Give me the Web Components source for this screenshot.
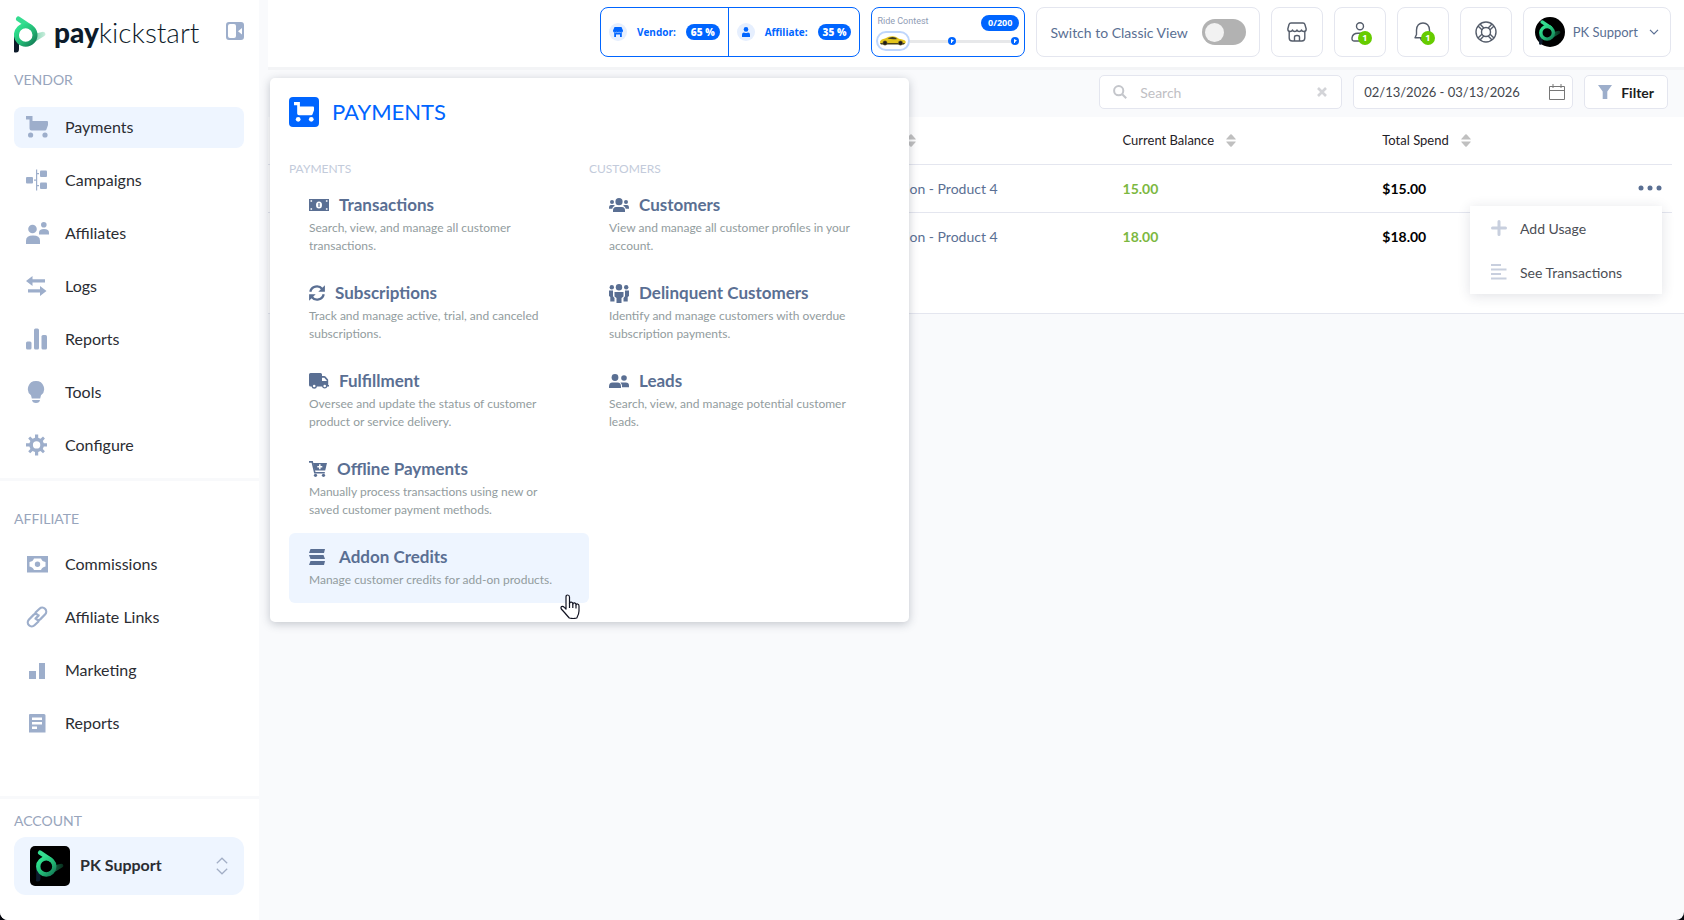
<!DOCTYPE html>
<html lang="en">
<head>
<meta charset="utf-8">
<meta name="viewport" content="width=device-width, initial-scale=1">
<title>PayKickstart - Addon Credits</title>
<style>
    :root {
        --blue: #0065ff;
        --slate: #5a6f93;
        --icon: #9daecb;
        --label: #98a5bc;
        --tint: #eef5ff;
        --line: #e4e6ef;
        --page: #f9fafc;
        --font: Lato, "Open Sans", "Liberation Sans", sans-serif;
    }
    html { background: #05060d; }
    body { margin: 0; font-family: var(--font); color: #2b2d33; }
</style>
</head>
<body>

<pk-app>
    <pk-sidebar slot="sidebar">
        <pk-nav-group label="Vendor">
            <pk-nav-item icon="cart" active>Payments</pk-nav-item>
            <pk-nav-item icon="campaigns">Campaigns</pk-nav-item>
            <pk-nav-item icon="affiliates">Affiliates</pk-nav-item>
            <pk-nav-item icon="logs">Logs</pk-nav-item>
            <pk-nav-item icon="bars">Reports</pk-nav-item>
            <pk-nav-item icon="bulb">Tools</pk-nav-item>
            <pk-nav-item icon="gear">Configure</pk-nav-item>
        </pk-nav-group>
        <pk-nav-group label="Affiliate">
            <pk-nav-item icon="cash">Commissions</pk-nav-item>
            <pk-nav-item icon="link">Affiliate Links</pk-nav-item>
            <pk-nav-item icon="steps">Marketing</pk-nav-item>
            <pk-nav-item icon="sheet">Reports</pk-nav-item>
        </pk-nav-group>
        <pk-account slot="account" name="PK Support"></pk-account>
    </pk-sidebar>

    <pk-topbar slot="topbar">
        <pk-split>
            <pk-stat icon="shopSolid" value="65 %">Vendor:</pk-stat>
            <pk-stat icon="userSolid" value="35 %">Affiliate:</pk-stat>
        </pk-split>
        <pk-contest score="0/200">Ride Contest</pk-contest>
        <pk-switch>Switch to Classic View</pk-switch>
        <pk-icon-button icon="shop" label="Marketplace"></pk-icon-button>
        <pk-icon-button icon="user" label="Affiliates" count="1"></pk-icon-button>
        <pk-icon-button icon="bell" label="Notifications" count="1"></pk-icon-button>
        <pk-icon-button icon="ring" label="Help"></pk-icon-button>
        <pk-profile>PK Support</pk-profile>
    </pk-topbar>

    <pk-toolbar range="02/13/2026 - 03/13/2026"></pk-toolbar>
    <pk-credits-table></pk-credits-table>

    <pk-mega-menu slot="menu" heading="Payments">
        <pk-menu-column label="Payments">
            <pk-menu-card icon="money" heading="Transactions">Search, view, and manage all customer transactions.</pk-menu-card>
            <pk-menu-card icon="sync" heading="Subscriptions">Track and manage active, trial, and canceled subscriptions.</pk-menu-card>
            <pk-menu-card icon="truck" heading="Fulfillment">Oversee and update the status of customer product or service delivery.</pk-menu-card>
            <pk-menu-card icon="cartPlus" heading="Offline Payments">Manually process transactions using new or saved customer payment methods.</pk-menu-card>
            <pk-menu-card icon="stack" heading="Addon Credits" active>Manage customer credits for add-on products.</pk-menu-card>
        </pk-menu-column>
        <pk-menu-column label="Customers">
            <pk-menu-card icon="group" heading="Customers">View and manage all customer profiles in your account.</pk-menu-card>
            <pk-menu-card icon="crowd" heading="Delinquent Customers">Identify and manage customers with overdue subscription payments.</pk-menu-card>
            <pk-menu-card icon="pair" heading="Leads">Search, view, and manage potential customer leads.</pk-menu-card>
        </pk-menu-column>
    </pk-mega-menu>
</pk-app>

<script>
// name: [width, height, markup], drawn on a grid of one unit per pixel
const ICONS = {
    cart: [22, 22, '<path d="M0 0h6.5v5H21q1 0 1 1v3l-1.6 4.6q-.4 1-1.5 1H5.5q-2 0-2-2V3.5H0z"/><circle cx="4.6" cy="19" r="2.6"/><circle cx="19" cy="19" r="2.6"/>'],
    campaigns: [22, 22, '<rect y="8" width="7" height="6.5" rx="1"/><rect x="14" y="1.5" width="7" height="6.5" rx="1"/><rect x="14" y="13.5" width="7" height="6.5" rx="1"/><path d="M10 .5h1.2v21H10zM8 10.5h2v1.2H8zM11 4h2v1.2h-2zM11 16h2v1.2h-2z"/>'],
    affiliates: [23, 22, '<circle cx="6.5" cy="7" r="4.3"/><path d="M0 22v-3.5q0-5 7-5t7 5V22z"/><circle cx="17.8" cy="2.8" r="2.8"/><path d="M13 12.5v-2q0-3.5 5-3.5t5 3.5v2z"/>'],
    logs: [22, 22, '<path d="M0 6l6.5-5v3.2H19v3.4H6.5V11zM20.5 16L14 11v3.2H2v3.4h12V21z"/>'],
    bars: [22, 22, '<rect y="13.5" width="5.5" height="8" rx="1.5"/><rect x="8" y=".5" width="5" height="21" rx="1.5"/><rect x="15.5" y="7" width="5.5" height="14.5" rx="1.5"/>'],
    bulb: [22, 22, '<path d="M10 0a8 8 0 0 1 5 14.3l-.8 3.2H5.800L5 14.3A8 8 0 0 1 10 0zM6 19h8q-.4 3-4 3t-4-3z"/>'],
    gear: [22, 22, '<path fill-rule="evenodd" d="M9 .5h3.2v3.3l2.3 1L17 2.6 18.9 4.5 16.8 7l1 2.3H21v3.3h-3.2l-1 2.3 2.1 2.4L17 19.3l-2.5-2.2-2.3 1v3.4H9v-3.4l-2.4-1-2.4 2.2-2-2 2.2-2.4-1-2.3H0V9.300h3.400l1-2.300-2.200-2.500 2-1.900 2.400 2.200 2.400-1zM10.600 7.200a3.700 3.700 0 1 0 0 7.400 3.700 3.700 0 0 0 0-7.400z"/>'],
    cash: [22, 22, '<path fill-rule="evenodd" d="M1 3h21v16.5H1zM8 5.5q-1 3-4.5 3.5v4.5q3.5.5 4.5 3.5h7q1-3 4.5-3.5V9q-3.5-.5-4.5-3.5zM11.5 8.6a2.7 2.7 0 1 1 0 5.4 2.7 2.7 0 0 1 0-5.4z"/>'],
    link: [22, 22, '<g fill="none" stroke="currentColor" stroke-width="2.2" stroke-linecap="round"><path d="M9.5 6.5l4-3.8a4 4 0 0 1 5.7 5.6l-4.7 4.8q-2 1.7-4 .3"/><path d="M12.5 15.5l-4 3.8a4 4 0 0 1-5.7-5.6l4.7-4.8q2-1.7 4-.3"/><path d="M9.5 12.6l3.2-3.2"/></g>'],
    steps: [22, 22, '<rect x="3" y="12" width="7" height="8"/><rect x="13" y="4" width="6" height="16"/>'],
    sheet: [22, 22, '<path fill-rule="evenodd" d="M4 2h14q1.5 0 1.5 1.5v17H3V3q0-1 1-1zM6 5.5V8h10V5.5zM6 10v2.5h10V10zM6 14.5V17h5v-2.5z"/>'],
    collapse: [18, 18, '<path fill-rule="evenodd" d="M3 0h12q3 0 3 3v12q0 3-3 3H3q-3 0-3-3V3q0-3 3-3zM4 2Q2 2 2 4v10q0 2 2 2h4q2 0 2-2V4q0-2-2-2zM16 6l-4 3.2L16 12.5z"/>'],
    shopSolid: [10, 10, '<path d="M1.5 0h7L10 3.5Q10 5.5 8.8 5.5V10H7V7.5H3V10H1.2V5.5Q0 5.5 0 3.5z"/><path stroke="#e6effe" stroke-width=".6" d="M1.5 5.2q1 .9 1.9 0 .8.9 1.7 0 .9.9 1.7 0 .8.9 1.7 0" fill="none"/>'],
    userSolid: [10, 10, '<circle cx="5" cy="2.4" r="2.3"/><path d="M1 10V7.8Q1 5.5 3 5.5q2 1.2 4 0 2 0 2 2.3V10z"/>'],
    shop: [20, 20, '<g fill="none" stroke="currentColor" stroke-width="1.4" stroke-linejoin="round"><path d="M4 1h12q1.5 0 1.9 1.5L19.2 7q0 2.5-2.3 2.5-2 0-2.4-1.5Q14 9.5 12.2 9.5T10 8q-.4 1.5-2.2 1.5T5.500 8Q5 9.500 3.100 9.500.8 9.500.8 7L2 2.500Q2.500 1 4 1z"/><path d="M2.200 9.500V16q0 3 3 3h9.600q3 0 3-3V9.500M7.500 19v-4q0-1.500 2.500-1.500t2.500 1.500v4"/></g>'],
    user: [20, 20, '<g fill="none" stroke="currentColor" stroke-width="1.4"><circle cx="10" cy="4.3" r="3.5"/><path d="M17.500 15.500q0-4-5-4.200H8q-5.300 0-6 4.500-.3 3 2 3.200h7"/></g>'],
    bell: [20, 20, '<path fill="none" stroke="currentColor" stroke-width="1.4" stroke-linejoin="round" d="M3.500 12.500V8Q4 1 10 1t6.500 7v4l2 3.700H2zM7.500 16q.5 3 3 3"/>'],
    ring: [22, 22, '<g fill="none" stroke="currentColor" stroke-width="1.4"><circle cx="11" cy="11" r="10"/><circle cx="11" cy="11" r="4.5"/><path d="M3 5l4.200 4M5 3l4 4.200M17 3l-4 4.200M19 5l-4.200 4M3 17l4.200-4M5 19l4-4.200M17 19l-4-4.200M19 17l-4.200-4"/></g>'],
    down: [10, 6, '<path fill="none" stroke="currentColor" stroke-width="1.2" d="M1 .8l4 4 4-4"/>'],
    updown: [12, 18, '<path fill="none" stroke="currentColor" stroke-width="1.2" d="M.8 6.300L6 1.200l5.200 5.100M.8 11.700L6 16.800l5.200-5.100"/>'],
    search: [14, 14, '<g fill="none" stroke="currentColor" stroke-width="2"><circle cx="5.7" cy="5.7" r="4.6"/><path d="M9.200 9.200l4 4"/></g>'],
    clear: [10, 10, '<path fill="none" stroke="currentColor" stroke-width="2.6" d="M1 1l8 8M9 1L1 9"/>'],
    calendar: [16, 16, '<path fill="none" stroke="currentColor" d="M.5 2.500h15v13H.5zM.5 6.500h15M4 0v4M12 0v4"/>'],
    funnel: [14, 14, '<path d="M0 0h14L9.300 6.500V14H4.700V6.500z"/>'],
    sort: [10, 13, '<path d="M.5 5.500Q0 5.500.5 4.700L4.300.5q.7-.7 1.400 0l3.800 4.200q.5.800 0 .8zM.5 7.500h9q.5 0 0 .8l-3.800 4.200q-.7.700-1.400 0L.5 8.300Q0 7.500.5 7.500z"/>'],
    dots: [24, 6, '<circle cx="3" cy="3" r="2.5"/><circle cx="12" cy="3" r="2.5"/><circle cx="21" cy="3" r="2.5"/>'],
    plus: [16, 16, '<path stroke="currentColor" stroke-width="3" stroke-linecap="round" d="M8 1.500v13M1.500 8h13"/>'],
    lines: [16, 16, '<path d="M0 0h10v2H0zM0 4.500h15.500v2H0zM0 9h10v2H0zM0 13.500h15.500v2H0z"/>'],
    money: [20, 12, '<path fill-rule="evenodd" d="M0 0h20v12H0zM10 2.500a3 3.500 0 1 0 0 7 3 3.500 0 0 0 0-7zM1.500 1.200v1.600h1.600V1.200zM16.900 1.200v1.600h1.600V1.200zM1.500 9.200v1.600h1.600V9.200zM16.900 9.200v1.600h1.600V9.200z"/><path d="M9.400 4h1.200v4H9.400z"/>'],
    sync: [16, 16, '<path fill="none" stroke="currentColor" stroke-width="2.3" d="M1.300 6.700A6.700 6.700 0 0 1 13.200 4M14.700 9.300A6.700 6.700 0 0 1 2.800 12"/><path d="M15.900.2v6.600H9.300zM.1 15.800V9.200h6.600z"/>'],
    truck: [20, 16, '<path fill-rule="evenodd" d="M1.500 0h10q1.500 0 1.500 1.500V3h2.200q.8 0 1.300.5l2.200 2.600q.5.500.5 1.200V12h.8v1.500h-1.600a2.800 2.800 0 0 1-5.400 0H8a2.800 2.800 0 0 1-5.500 0H1.500Q0 13.500 0 12V1.500Q0 0 1.500 0zM13 4.700V8h4.700v-.6L15.300 4.700z"/><g fill="#fff"><circle cx="5.2" cy="13" r="1.3"/><circle cx="15.7" cy="13" r="1.3"/></g>'],
    cartPlus: [18, 16, '<path fill="none" stroke="currentColor" stroke-width="1.6" d="M0 .9h3.200l2.600 10.800h10"/><path d="M4 2h14l-1.800 7.500H5.600z"/><circle cx="6.5" cy="14.3" r="1.6"/><circle cx="14.5" cy="14.3" r="1.6"/><path stroke="#fff" stroke-width="1.5" d="M10.800 3.300v5M8.300 5.800h5"/>'],
    stack: [20, 16, '<path d="M1.500 0H16l-1 4H0zM0 6h14.500L16 10H1.500zM1.500 12H16l-1 4H0z"/>'],
    group: [20, 14, '<circle cx="10" cy="3.7" r="3.6"/><circle cx="3" cy="4" r="2"/><circle cx="17" cy="4" r="2"/><path d="M4 14v-1.500Q4 9 7 9h6q3 0 3 3.500V14zM0 10q0-3 2-3h2.500q1 0 1.300.8-2.300 1-2.600 3H0zM20 10q0-3-2-3h-2.500q-1 0-1.300.8 2.300 1 2.600 3H20z"/>'],
    crowd: [20, 19, '<circle cx="10" cy="3.2" r="3.2"/><circle cx="2.8" cy="3.2" r="2.2"/><circle cx="17.2" cy="3.2" r="2.2"/><path d="M5.500 8h9v4.500l-2 1.500v5h-5v-5l-2-1.500zM0 6.500h4v5.700L5.500 14v3.500H1.300V13L0 12zM20 6.500h-4v5.700L14.500 14v3.500h4.200V13L20 12z"/>'],
    pair: [20, 14, '<circle cx="6" cy="3.5" r="3.4"/><circle cx="15" cy="4" r="2.8"/><path d="M0 14v-1.500q0-4 3.500-4h5q3.500 0 3.500 4V14zM13 13.300q.2-3-1.500-4.800h5.300q3.200 0 3.200 3.300v1.500z"/>']
};

function svg(name) {
    const [w, h, markup] = ICONS[name];
    return `<svg width="${w}" height="${h}" viewBox="0 0 ${w} ${h}" fill="currentColor" aria-hidden="true">${markup}</svg>`;
}

// Ring with two arms and a stem; the stem is darker on a white ground
function mark(width, height, stem) {
    return `<svg width="${width}" height="${height}" viewBox="0 0 32 37" aria-hidden="true">
        <defs>
            <linearGradient id="r" x1="0" y1="0" x2="1" y2="1"><stop offset=".1" stop-color="#2fe08e"/><stop offset=".6" stop-color="#22b573"/><stop offset="1" stop-color="#137a55"/></linearGradient>
            <linearGradient id="a" x1="0" y1="0" x2="1" y2="0"><stop offset="0" stop-color="#22b573"/><stop offset="1" stop-color="#22b573" stop-opacity=".4"/></linearGradient>
        </defs>
        <path d="M0 18h5v15q0 3.500-3 3.500T0 34z" fill="${stem}"/>
        <path d="M4.500 3l12 8" stroke="#35dc90" stroke-width="5" stroke-linecap="round"/>
        <path d="M20 18l9-2.200q2.500.2 2.500 2.400 0 1.200-1.500 2L19 27z" fill="url(#a)" opacity=".6"/>
        <circle cx="11.7" cy="19" r="9.3" fill="none" stroke="url(#r)" stroke-width="5"/>
    </svg>`;
}

const BASE = ':host,*{box-sizing:border-box}svg{display:block;flex:none}button,input{font:inherit;color:inherit}button{cursor:pointer;padding:0}a{color:inherit;text-decoration:none}h1,h2,h3,p{margin:0}';

class PkElement extends HTMLElement {
    constructor() {
        super();
        this.attachShadow({ mode: 'open' });
    }

    connectedCallback() {
        this.shadowRoot.innerHTML = '<style>' + BASE + this.styles() + '</style>' + this.render();
    }

    attr(name) { return this.getAttribute(name) || ''; }
    styles() { return ':host{display:block}'; }
    render() { return '<slot></slot>'; }
}

customElements.define('pk-app', class extends PkElement {
    styles() {
        return `
        :host{display:grid;grid-template-columns:259px minmax(0,1fr);min-height:100vh;background:var(--page);border-radius:0 0 8px 8px;overflow:hidden}
        .main{position:relative;padding-left:9px;min-width:0}
        `;
    }
    render() {
        return '<slot name="sidebar"></slot><div class="main"><slot name="topbar"></slot><main><slot></slot></main><slot name="menu"></slot></div>';
    }
});

/* ---------- sidebar ---------- */

customElements.define('pk-sidebar', class extends PkElement {
    styles() {
        return `
        :host{display:flex;flex-direction:column;background:#fff}
        header{display:flex;align-items:center;justify-content:space-between;height:68px;padding:0 15px 0 14px}
        .brand{display:flex;align-items:center;gap:8px;font-size:28px;line-height:32px;font-weight:300;color:#0d1b2a}
        .brand span{padding-bottom:4px}
        b{font-weight:900}
        .collapse{border:0;background:none;color:var(--icon);padding-bottom:6px}
        .account{margin-top:auto}
        `;
    }
    render() {
        return `<header><a class="brand" href="#">${mark(32, 37, '#0d1b2a')}<span><b>pay</b>kickstart</span></a>` +
            `<button class="collapse" aria-label="Collapse menu">${svg('collapse')}</button></header>` +
            '<nav><slot></slot></nav><div class="account"><slot name="account"></slot></div>';
    }
});

customElements.define('pk-nav-group', class extends PkElement {
    styles() {
        return `
        :host{display:block;padding:2px 15px 12px 14px}
        :host(:not(:first-of-type)){border-top:3px solid #f8f9fb;padding-top:28px}
        h2{font-size:14px;line-height:20px;font-weight:400;color:var(--label);text-transform:uppercase}
        .items{display:flex;flex-direction:column;gap:12px;margin-top:17px}
        :host(:not(:first-of-type)) .items{margin-top:15px}
        `;
    }
    render() { return `<h2>${this.attr('label')}</h2><div class="items"><slot></slot></div>`; }
});

customElements.define('pk-nav-item', class extends PkElement {
    styles() {
        return `
        :host{display:block}
        a{display:flex;align-items:center;height:41px;padding:0 12px 2px;gap:17px;border-radius:8px;font-size:16px}
        :host([active]) a{background:var(--tint)}
        i{display:flex;width:22px;color:var(--icon)}
        `;
    }
    render() { return `<a href="#"><i>${svg(this.attr('icon'))}</i><slot></slot></a>`; }
});

customElements.define('pk-account', class extends PkElement {
    styles() {
        return `
        :host{display:block;border-top:3px solid #f8f9fb;padding:12px 15px 25px 14px}
        h2{font-size:14px;line-height:20px;font-weight:400;color:var(--label);text-transform:uppercase}
        button{display:flex;align-items:center;gap:10px;width:100%;height:58px;margin-top:6px;padding:0 16px;border:0;border-radius:12px;background:var(--tint);font-size:16px;font-weight:700;text-align:left}
        .avatar{display:flex;align-items:center;justify-content:center;width:40px;height:40px;border-radius:5px;background:#000}
        .name{flex:1;padding-bottom:4px}
        .arrows{color:#a3afc6}
        `;
    }
    render() {
        return `<h2>Account</h2><button><span class="avatar">${mark(28, 32, '#0c1a2c')}</span><span class="name">${this.attr('name')}</span><span class="arrows">${svg('updown')}</span></button>`;
    }
});

/* ---------- top bar ---------- */

customElements.define('pk-topbar', class extends PkElement {
    styles() {
        return ':host{display:flex;justify-content:flex-end;gap:11px;height:70px;padding:7px 13px 10px 0;background:#fff;border-bottom:3px solid #f3f4f6}';
    }
});

customElements.define('pk-split', class extends PkElement {
    styles() { return ':host{display:flex;border:1px solid var(--blue);border-radius:8px;background:#fff}'; }
});

customElements.define('pk-stat', class extends PkElement {
    styles() {
        return `
        :host{display:flex;align-items:center;gap:10px;padding:0 8px;font:700 10px "Open Sans",sans-serif;color:var(--blue)}
        :host(:not(:first-child)){border-left:1px solid var(--blue)}
        i{display:flex;align-items:center;justify-content:center;width:18px;height:18px;border-radius:50%;background:#e6effe}
        b{padding:0 5px;line-height:16px;border-radius:8px;background:var(--blue);color:#fff}
        `;
    }
    render() { return `<i>${svg(this.attr('icon'))}</i><span><slot></slot></span><b>${this.attr('value')}</b>`; }
});

customElements.define('pk-contest', class extends PkElement {
    styles() {
        return `
        :host{display:flex;flex-direction:column;width:154px;border:1px solid var(--blue);border-radius:8px;padding:7px 5px 4px 4px;background:#fff}
        .top{display:flex;justify-content:space-between;font:400 9px/12px Roboto,sans-serif;color:#8f9cb5}
        .top span{padding-left:1px}
        b{padding:0 7px;font:700 9px/16px "Open Sans",sans-serif;border-radius:8px;background:var(--blue);color:#fff}
        .track{display:flex;align-items:center}
        .car{border:2px solid #bfd6fc;border-radius:10px;padding:2px 1px}
        .bar{flex:1;height:3px;background:#e7e8ea}
        .bar.first{flex-grow:2;flex-basis:0}
        .bar.last{flex-grow:3;flex-basis:0}
        `;
    }
    render() {
        const flag = '<svg width="8" height="8" viewBox="0 0 8 8"><circle cx="4" cy="4" r="4" fill="#0065ff"/><path d="M3 2l3 1.500L4 5v1H3z" fill="#fff"/></svg>';
        const car = `<svg width="28" height="12" viewBox="0 0 28 12">
            <path d="M1 6.500q1-2.500 5-3 4-2.500 8-2.300 3.500.3 6 2.600 5 .7 6.500 2.200.7 1.500-.5 2.800H2Q.6 8 1 6.500z" fill="#e3c41c"/>
            <path d="M8.500 3.600Q11 2 13.500 2q3 .2 4.700 1.900-4 .7-9.700-.3z" fill="#3b3a24"/>
            <path d="M1 8h25l-1 1.500H2z" fill="#4a431a"/>
            <g fill="#1c1c1c" stroke="#86752a" stroke-width=".5"><circle cx="6" cy="8" r="2.200"/><circle cx="21.500" cy="8" r="2.200"/></g>
        </svg>`;
        return `<div class="top"><span><slot></slot></span><b>${this.attr('score')}</b></div>` +
            `<div class="track"><span class="car">${car}</span><span class="bar first"></span>${flag}<span class="bar last"></span>${flag}</div>`;
    }
});

customElements.define('pk-switch', class extends PkElement {
    styles() {
        return `
        :host{display:flex;border:1px solid var(--line);border-radius:8px;background:#fff}
        label{display:flex;align-items:center;gap:14px;padding:0 13px;font-size:14px;color:var(--slate);white-space:nowrap;cursor:pointer}
        input{appearance:none;display:flex;align-items:center;width:44px;height:26px;margin:0;padding:0 3px;border-radius:13px;background:#b2b2b2}
        input::before{content:"";width:19px;height:19px;border-radius:50%;background:#f2f2f2}
        input:checked{background:var(--blue);justify-content:flex-end}
        `;
    }
    render() { return '<label><slot></slot><input type="checkbox" role="switch"></label>'; }
});

customElements.define('pk-icon-button', class extends PkElement {
    styles() {
        return `
        :host{display:flex}
        button{display:flex;align-items:center;justify-content:center;width:52px;border:1px solid var(--line);border-radius:8px;background:#fff;color:#555d6b}
        .wrap{position:relative}
        .count{position:absolute;left:8px;top:9px;width:14px;border-radius:50%;background:#66cc00;color:#fff;font:700 9px/14px "Open Sans",sans-serif;text-align:center}
        `;
    }
    render() {
        const count = this.attr('count');
        return `<button aria-label="${this.attr('label')}"><span class="wrap">${svg(this.attr('icon'))}${count ? `<span class="count">${count}</span>` : ''}</span></button>`;
    }
});

customElements.define('pk-profile', class extends PkElement {
    styles() {
        return `
        :host{display:flex}
        button{display:flex;align-items:center;gap:8px;padding:0 11px;border:1px solid var(--line);border-radius:8px;background:#fff;font-size:13px;color:var(--slate);white-space:nowrap}
        .avatar{display:flex;align-items:center;justify-content:center;width:30px;height:30px;border-radius:50%;background:#000}
        .arrow{padding-left:3px}
        `;
    }
    render() { return `<button><span class="avatar">${mark(22, 25, '#0c1a2c')}</span><slot></slot><span class="arrow">${svg('down')}</span></button>`; }
});

/* ---------- content ---------- */

customElements.define('pk-toolbar', class extends PkElement {
    styles() {
        return `
        :host{display:flex;justify-content:flex-end;gap:11px;padding:5px 16px 8px}
        .field,button.filter{display:flex;align-items:center;height:34px;border:1px solid var(--line);border-radius:5px;background:#fff;font-size:14px}
        input{flex:1;min-width:0;border:0;outline:0;padding:0;background:none}
        .search{width:243px;padding:0 14px 0 13px;gap:13px;color:#c4c6cb}
        .search input{color:#444}
        .search input::placeholder{color:#bfc0c4;opacity:1}
        .clear{border:0;background:none;color:#d3d4d8}
        .date{width:220px;padding:0 7px 0 10px;font-size:13px;color:#44474e}
        .date svg{color:#777}
        button.filter{gap:9px;padding:0 13px;font-weight:700;color:#1c1e22}
        .filter svg{color:var(--icon)}
        `;
    }
    render() {
        return `<label class="field search">${svg('search')}<input type="text" placeholder="Search" aria-label="Search"><button class="clear" aria-label="Clear">${svg('clear')}</button></label>` +
            `<label class="field date"><input type="text" value="${this.attr('range')}" aria-label="Date range">${svg('calendar')}</label>` +
            `<button class="filter">${svg('funnel')}Filter</button>`;
    }
});

customElements.define('pk-credits-table', class extends PkElement {
    constructor() {
        super();
        this._rows = [
            { product: 'Subscription - Product 4', balance: '15.00', spend: '$15.00', open: true },
            { product: 'Subscription - Product 4', balance: '18.00', spend: '$18.00' }
        ];
    }
    styles() {
        return `
        :host{display:block;background:#fff;border-bottom:1px solid var(--line);padding:0 12px 53px 0}
        table{width:100%;table-layout:fixed;border-collapse:collapse;font-size:14px}
        th{height:47px;padding:0 8px;font-size:13px;font-weight:400;text-align:left;color:#1f2126}
        th span{display:flex;align-items:center;gap:12px}
        th svg{color:#c0c0c0}
        td{height:48px;padding:0 8px;border-top:1px solid var(--line);white-space:nowrap}
        .data{width:18.5%}
        .name{width:19.5%}
        .act{width:38px}
        .product{color:var(--slate)}
        .balance{color:#7cb83f;font-weight:700}
        .spend{color:#000;font-weight:700}
        .actions{padding:0 10px 0 0}
        .anchor{position:relative;display:flex;justify-content:flex-end}
        .more{border:0;background:none;color:var(--slate);height:20px}
        `;
    }
    render() {
        const th = label => `<th scope="col"><span>${label}${svg('sort')}</span></th>`;
        const rows = this._rows.map(r => `<tr><td></td>
            <td class="product">${r.product}</td><td class="balance">${r.balance}</td><td class="spend">${r.spend}</td>
            <td class="actions">${r.open ? `<div class="anchor"><button class="more" aria-label="Row actions">${svg('dots')}</button><pk-row-menu></pk-row-menu></div>` : ''}</td></tr>`).join('');
        return `<table><colgroup><col><col class="name"><col class="data"><col class="data"><col class="act"></colgroup>
            <thead><tr><th></th>${th('Product')}${th('Current Balance')}${th('Total Spend')}<th></th></tr></thead><tbody>${rows}</tbody></table>`;
    }
});

customElements.define('pk-row-menu', class extends PkElement {
    styles() {
        return `
        :host{position:absolute;right:0;top:28px;z-index:2;width:192px;background:#fff;box-shadow:0 2px 12px rgba(40,50,80,.14)}
        a{display:flex;align-items:center;gap:13px;height:44px;padding:0 21px;font-size:14px;color:#4b4e55;white-space:nowrap}
        svg{color:#c8cfde}
        `;
    }
    render() { return `<a href="#">${svg('plus')}Add Usage</a><a href="#">${svg('lines')}See Transactions</a>`; }
});

/* ---------- payments menu ---------- */

customElements.define('pk-mega-menu', class extends PkElement {
    styles() {
        return `
        :host{position:absolute;left:11px;top:78px;z-index:5;width:639px;padding:19px 20px 19px 19px;background:#fff;border-radius:5px;box-shadow:0 2px 10px rgba(50,60,80,.28)}
        header{display:flex;align-items:center;gap:13px}
        i{display:flex;align-items:center;justify-content:center;width:30px;height:30px;border-radius:4px;background:var(--blue);color:#fff}
        i svg{width:20px;height:20px}
        h1{font-size:22px;line-height:30px;font-weight:400;color:var(--blue);text-transform:uppercase}
        .columns{display:grid;grid-template-columns:1fr 1fr;margin-top:33px}
        `;
    }
    render() { return `<header><i>${svg('cart')}</i><h1>${this.attr('heading')}</h1></header><div class="columns"><slot></slot></div>`; }
});

customElements.define('pk-menu-column', class extends PkElement {
    styles() { return ':host{display:block}h2{font-size:12px;line-height:18px;font-weight:400;color:#c3cbdb;text-transform:uppercase;margin-bottom:3px}'; }
    render() { return `<h2>${this.attr('label')}</h2><slot></slot>`; }
});

customElements.define('pk-menu-card', class extends PkElement {
    styles() {
        return `
        :host{display:block;position:relative}
        a{display:block;padding:12px 28px 14px 20px;border-radius:6px}
        :host([active]) a{background:var(--tint)}
        h3{display:flex;align-items:center;gap:10px;font-size:17px;line-height:24px;font-weight:700;color:var(--slate);white-space:nowrap}
        p{margin-top:2px;font-size:12px;line-height:18px;color:#929c9e}
        .hand{position:absolute;right:9px;top:61px}
        `;
    }
    render() {
        const hand = '<svg class="hand" width="20" height="25" viewBox="0 0 20 25" aria-hidden="true"><path d="M6 15V3q0-2 1.700-2t1.800 2v6.500q.2-1.500 1.800-1.300 1.500.2 1.500 1.800.3-1.300 1.700-1.100 1.400.2 1.500 1.900.5-1 1.600-.8 1.400.3 1.400 2V17q0 3-2.200 7-3.500 1-7.500 0Q7 21.500 4.500 18.500L1.300 15q-.8-1.700.3-2.400 1.300-.7 2.700.8z" fill="#fff" stroke="#111322" stroke-width="1.200" stroke-linejoin="round"/><path d="M9.500 9v5M12.800 10v4M16 11v3.500" stroke="#111322" stroke-width="1.200"/></svg>';
        return `<a href="#"><h3>${svg(this.attr('icon'))}${this.attr('heading')}</h3><p><slot></slot></p></a>${this.hasAttribute('active') ? hand : ''}`;
    }
});
</script>
</body>
</html>
